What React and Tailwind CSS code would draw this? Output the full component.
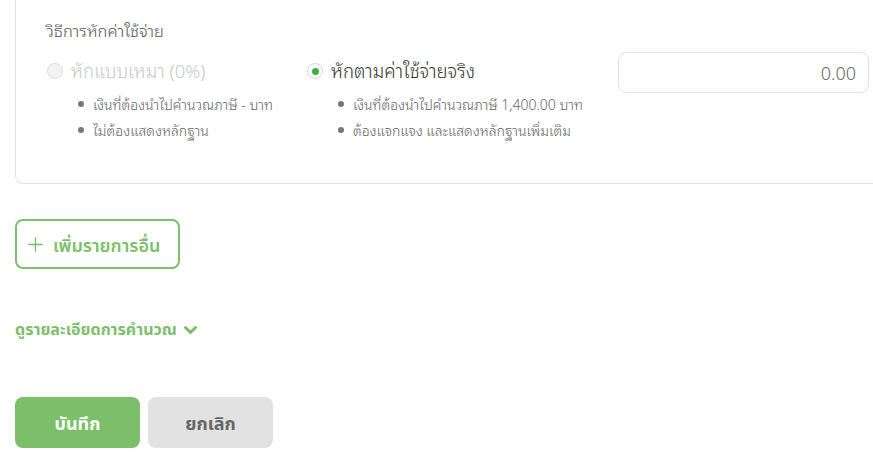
import React, { useState } from 'react';
import { Plus } from 'lucide-react';

const font = { fontFamily: '"Noto Sans", "Noto Sans Thai Looped", "Liberation Sans", sans-serif' };
const btnFont = { fontFamily: '"Noto Sans Thai", "Noto Sans", "Liberation Sans", sans-serif' };

const Bullet = ({ children }) => (
    <li className="flex items-center h-[26px] text-[14px] font-light text-[#666]">
        <span className="w-[6px] h-[6px] rounded-full bg-[#777] mr-[9px] shrink-0"></span>
        {children}
    </li>
);

const Radio = ({ checked, disabled }) => (
    <span
        className={`w-4 h-4 rounded-full border flex items-center justify-center shrink-0 ${
            disabled ? 'border-[#ddd] bg-[#f3f3f3]' : 'border-[#d6d6d6] bg-white'
        }`}
    >
        {checked && <span className="w-[7px] h-[7px] rounded-full bg-[#3cb043]"></span>}
    </span>
);

export default function App() {
    const [amount, setAmount] = useState('0.00');

    return (
        <div className="w-[873px] h-[472px] overflow-hidden bg-white" style={font}>
            {/* Expense method card */}
            <div className="ml-[15px] w-[900px] h-[184px] border border-t-0 border-[#e2e2e2] rounded-bl-lg pl-[30px] pt-[20px]">
                <div className="text-[16.5px] font-light text-[#555] leading-[22px]">วิธีการหักค่าใช้จ่าย</div>

                <div className="flex mt-[10px]">
                    <div className="w-[261px] pl-px">
                        <label className="flex items-center h-[38px]">
                            <Radio disabled />
                            <span className="ml-2 text-[18.5px] font-light text-[#c8c8c8]">หักแบบเหมา (0%)</span>
                        </label>
                        <ul className="pl-[31px] mt-[1px]">
                            <Bullet>เงินที่ต้องนำไปคำนวณภาษี - บาท</Bullet>
                            <Bullet>ไม่ต้องแสดงหลักฐาน</Bullet>
                        </ul>
                    </div>

                    <div className="w-[311px]">
                        <label className="flex items-center h-[38px]">
                            <Radio checked />
                            <span className="ml-2 text-[18.5px] font-light text-[#333]">หักตามค่าใช้จ่ายจริง</span>
                        </label>
                        <ul className="pl-[31px] mt-[1px]">
                            <Bullet>เงินที่ต้องนำไปคำนวณภาษี 1,400.00 บาท</Bullet>
                            <Bullet>ต้องแจกแจง และแสดงหลักฐานเพิ่มเติม</Bullet>
                        </ul>
                    </div>

                    <div>
                        <input
                            type="text"
                            value={amount}
                            onChange={(e) => setAmount(e.target.value)}
                            className="w-[251px] h-[41px] border border-[#e2e2e2] rounded-lg px-3 text-right text-[18px] font-light text-[#666] outline-none"
                        />
                    </div>
                </div>
            </div>

            {/* Add another item */}
            <button
                type="button"
                style={btnFont}
                className="mt-[35px] ml-[15px] w-[165px] h-[50px] border-2 border-[#7cc06c] rounded-lg flex items-center pl-[7px] text-[#7cbf6a] font-semibold text-[18px]"
            >
                <Plus className="w-[23px] h-[23px] mr-[6px]" strokeWidth={1.4} />
                <span className="pt-[4px]">เพิ่มรายการอื่น</span>
            </button>

            {/* Calculation detail toggle */}
            <button
                type="button"
                style={btnFont}
                className="mt-[48px] ml-[15px] flex items-center text-[16px] font-bold text-[#7cbf6a]"
            >
                <span className="pt-[1px]">ดูรายละเอียดการคำนวณ</span>
                <svg className="w-[13px] h-[10px] ml-[7px]" viewBox="0 0 13 10" fill="none">
                    <path d="M1.5 2.5 L6.5 7.5 L11.5 2.5" stroke="currentColor" strokeWidth="3" strokeLinecap="round" strokeLinejoin="round" />
                </svg>
            </button>

            {/* Actions */}
            <div className="flex gap-[8px] ml-[15px] mt-[55px]" style={btnFont}>
                <button
                    type="button"
                    className="w-[125px] h-[51px] pt-[4px] rounded-lg bg-[#7cbf6a] text-white text-[18px] font-bold"
                >
                    บันทึก
                </button>
                <button
                    type="button"
                    className="w-[125px] h-[51px] pt-[4px] rounded-lg bg-[#e2e2e2] text-[#666] text-[18px] font-bold"
                >
                    ยกเลิก
                </button>
            </div>
        </div>
    );
}
